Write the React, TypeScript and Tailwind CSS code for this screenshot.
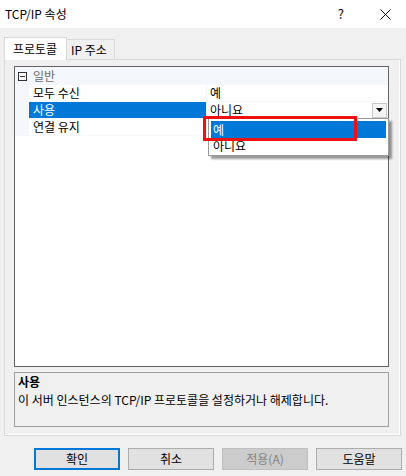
import React from "react";

const font = "font-['Noto_Sans_CJK_KR','Noto_Sans',sans-serif]";

const rows = [
  { name: "모두 수신", value: "예" },
  { name: "사용", value: "아니요", selected: true },
  { name: "연결 유지", value: "" },
];

const buttons = [
  { label: "확인", kind: "primary" },
  { label: "취소", kind: "normal" },
  { label: "적용(A)", kind: "disabled" },
  { label: "도움말", kind: "normal" },
];

export default function App() {
  return (
    <div className={`relative w-[406px] h-[476px] overflow-hidden bg-[#f0f0f0] text-[12px] text-black ${font}`}>
      {/* title bar */}
      <div className="flex items-center h-[28px] bg-white pl-[5px] pr-[15px]">
        <span className="leading-[16px]">TCP/IP 속성</span>
        <span className="ml-auto mr-[36px] text-[13px] leading-[16px]">?</span>
        <svg width="11" height="11" viewBox="0 0 11 11">
          <path d="M0.5 0.5 L10.5 10.5 M10.5 0.5 L0.5 10.5" stroke="#111" strokeWidth="1" />
        </svg>
      </div>

      <div className="px-[4px] pt-[8px]">
        {/* tabs */}
        <div className="flex items-end h-[23px]">
          <div className="relative z-10 -mb-px flex items-center h-[23px] w-[63px] pl-[8px] bg-white border border-b-0 border-[#d9d9d9]">
            <span className="leading-[16px]">프로토콜</span>
          </div>
          <div className="flex items-center h-[20px] w-[48px] pl-[4px] border border-l-0 border-b-0 border-[#d9d9d9]">
            <span className="leading-[16px]">IP 주소</span>
          </div>
        </div>

        {/* tab page */}
        <div className="w-[397px] h-[377px] border border-[#d9d9d9] bg-[#f0f0f0] shadow-[inset_-1px_-1px_0_#ffffff] pl-[9px] pt-[6px]">
          {/* property grid */}
          <div className="relative w-[375px] h-[301px] border border-[#646464] bg-white">
            <div className="flex items-center h-[18px] bg-[#f4f7fc]">
              <div className="flex items-center justify-center w-[14px]">
                <div className="relative w-[9px] h-[9px] border border-[#333] bg-white">
                  <div className="absolute left-[1px] top-[3px] w-[5px] h-px bg-[#333]" />
                </div>
              </div>
              <span className="ml-[4px] leading-[16px] text-[#6d6d6d]">일반</span>
            </div>
            {rows.map((r) => (
              <div key={r.name} className="flex h-[17px] border-b border-[#f4f7fc]">
                <div className="w-[14px] bg-[#f4f7fc]" />
                <div
                  className={`flex items-center w-[177px] pl-[4px] ${
                    r.selected ? "bg-[#0078d7] text-white" : ""
                  }`}
                >
                  <span className="leading-[16px]">{r.name}</span>
                </div>
                <div className="w-px bg-[#f4f7fc]" />
                <div className="flex items-center flex-1 pl-[3px] pr-[1px]">
                  <span className="leading-[16px]">{r.value}</span>
                  {r.selected && (
                    <div className="ml-auto flex items-center justify-center w-[15px] h-[15px] bg-[#f4f4f4] border border-[#c8c8c8]">
                      <svg width="7" height="4" viewBox="0 0 7 4">
                        <path d="M0 0 H7 L3.5 4 Z" fill="#000" />
                      </svg>
                    </div>
                  )}
                </div>
              </div>
            ))}

            {/* dropdown list */}
            <div className="absolute left-[193px] top-[51px] w-[181px] h-[38px] border border-[#9a9a9a] bg-white shadow-[3px_3px_2px_rgba(0,0,0,0.4)] p-[2px]">
              <div className="flex items-center h-[17px] pl-[2px] bg-[#0078d7] text-white">
                <span className="leading-[16px]">예</span>
              </div>
              <div className="flex items-center h-[15px] pl-[2px]">
                <span className="leading-[16px]">아니요</span>
              </div>
            </div>

            {/* highlight */}
            <div className="absolute left-[188px] top-[49px] w-[154px] h-[25px] border-[3px] border-[#ee1111]" />
          </div>

          {/* description */}
          <div className="mt-[5px] w-[375px] h-[55px] border border-[#a0a0a0] bg-[#f0f0f0] px-[3px] pt-[1px]">
            <div className="font-bold leading-[16px]">사용</div>
            <div className="mt-[2px] leading-[16px]">이 서버 인스턴스의 TCP/IP 프로토콜을 설정하거나 해제합니다.</div>
          </div>
        </div>

        {/* buttons */}
        <div className="flex justify-end gap-[8px] mt-[12px] pr-0">
          {buttons.map((b) => (
            <div
              key={b.label}
              className={`flex items-center justify-center w-[86px] h-[22px] ${
                b.kind === "primary"
                  ? "border-2 border-[#0078d7] bg-[#e1e1e1]"
                  : b.kind === "disabled"
                  ? "border border-[#bfbfbf] bg-[#cccccc] text-[#838383]"
                  : "border border-[#adadad] bg-[#e1e1e1]"
              }`}
            >
              <span className="leading-[16px]">{b.label}</span>
            </div>
          ))}
        </div>
      </div>
    </div>
  );
}
